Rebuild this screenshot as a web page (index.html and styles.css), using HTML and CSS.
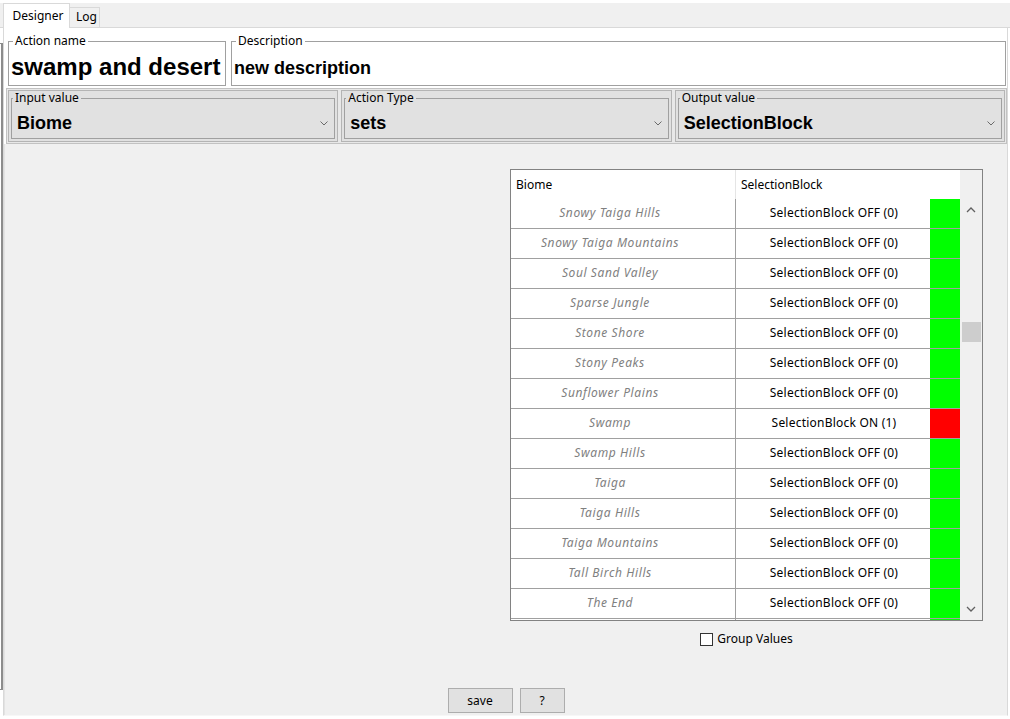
FILE: index.html
```html
<!DOCTYPE html>
<html lang="en">
<head>
<meta charset="utf-8">
<title>Designer</title>
<link rel="stylesheet" href="styles.css">
</head>
<body>
<div class="app">
  <div class="behind"></div>
  <div class="tabbar">
    <div class="tab tab-active">Designer</div>
    <div class="tab tab-log">Log</div>
  </div>
  <div class="page">
    <div class="fields">
      <fieldset class="gbox gbox-name">
        <legend>Action name</legend>
        <div class="gval gval-name">swamp and desert</div>
      </fieldset>
      <fieldset class="gbox gbox-desc">
        <legend>Description</legend>
        <div class="gval gval-desc">new description</div>
      </fieldset>
    </div>
    <div class="combos">
      <div class="combo">
        <fieldset class="cframe">
          <legend>Input value</legend>
          <div class="cval"><span>Biome</span><svg class="chev" width="8" height="5" viewBox="0 0 8 5"><polyline points="0.5,0.5 4,4 7.5,0.5" fill="none" stroke="#6a6a6a" stroke-width="1"/></svg></div>
        </fieldset>
      </div>
      <div class="combo">
        <fieldset class="cframe">
          <legend>Action Type</legend>
          <div class="cval"><span>sets</span><svg class="chev" width="8" height="5" viewBox="0 0 8 5"><polyline points="0.5,0.5 4,4 7.5,0.5" fill="none" stroke="#6a6a6a" stroke-width="1"/></svg></div>
        </fieldset>
      </div>
      <div class="combo">
        <fieldset class="cframe">
          <legend>Output value</legend>
          <div class="cval"><span>SelectionBlock</span><svg class="chev" width="8" height="5" viewBox="0 0 8 5"><polyline points="0.5,0.5 4,4 7.5,0.5" fill="none" stroke="#6a6a6a" stroke-width="1"/></svg></div>
        </fieldset>
      </div>
    </div>
    <div class="main">
      <div class="tablecol">
        <div class="grid">
          <div class="gbody">
            <div class="ghead">
              <div class="hc hc1">Biome</div>
              <div class="hc hc2">SelectionBlock</div>
            </div>
            <div class="grow"><div class="c1">Snowy Taiga Hills</div><div class="c2">SelectionBlock OFF (0)</div><div class="c3 off"></div></div>
            <div class="grow"><div class="c1">Snowy Taiga Mountains</div><div class="c2">SelectionBlock OFF (0)</div><div class="c3 off"></div></div>
            <div class="grow"><div class="c1">Soul Sand Valley</div><div class="c2">SelectionBlock OFF (0)</div><div class="c3 off"></div></div>
            <div class="grow"><div class="c1">Sparse Jungle</div><div class="c2">SelectionBlock OFF (0)</div><div class="c3 off"></div></div>
            <div class="grow"><div class="c1">Stone Shore</div><div class="c2">SelectionBlock OFF (0)</div><div class="c3 off"></div></div>
            <div class="grow"><div class="c1">Stony Peaks</div><div class="c2">SelectionBlock OFF (0)</div><div class="c3 off"></div></div>
            <div class="grow"><div class="c1">Sunflower Plains</div><div class="c2">SelectionBlock OFF (0)</div><div class="c3 off"></div></div>
            <div class="grow"><div class="c1">Swamp</div><div class="c2">SelectionBlock ON (1)</div><div class="c3 on"></div></div>
            <div class="grow"><div class="c1">Swamp Hills</div><div class="c2">SelectionBlock OFF (0)</div><div class="c3 off"></div></div>
            <div class="grow"><div class="c1">Taiga</div><div class="c2">SelectionBlock OFF (0)</div><div class="c3 off"></div></div>
            <div class="grow"><div class="c1">Taiga Hills</div><div class="c2">SelectionBlock OFF (0)</div><div class="c3 off"></div></div>
            <div class="grow"><div class="c1">Taiga Mountains</div><div class="c2">SelectionBlock OFF (0)</div><div class="c3 off"></div></div>
            <div class="grow"><div class="c1">Tall Birch Hills</div><div class="c2">SelectionBlock OFF (0)</div><div class="c3 off"></div></div>
            <div class="grow"><div class="c1">The End</div><div class="c2">SelectionBlock OFF (0)</div><div class="c3 off"></div></div>
            <div class="grow"><div class="c1"></div><div class="c2"></div><div class="c3 off"></div></div>
          </div>
          <div class="vscroll">
            <div class="sb-head"></div>
            <div class="sb-btn"><svg width="10" height="6" viewBox="0 0 10 6"><polyline points="1,5 5,1 9,5" fill="none" stroke="#606060" stroke-width="1.3"/></svg></div>
            <div class="sb-track"><div class="sb-thumb"></div></div>
            <div class="sb-btn"><svg width="10" height="6" viewBox="0 0 10 6"><polyline points="1,1 5,5 9,1" fill="none" stroke="#606060" stroke-width="1.3"/></svg></div>
          </div>
        </div>
        <label class="check"><span class="cbox"></span><span>Group Values</span></label>
      </div>
      <div class="buttons">
        <button class="btn btn-save">save</button>
        <button class="btn btn-help">?</button>
      </div>
    </div>
  </div>
</div>
</body>
</html>
```
FILE: styles.css
```css
* { box-sizing: border-box; }
html, body { margin: 0; padding: 0; }
body {
  width: 1010px;
  height: 719px;
  overflow: hidden;
  background: #ffffff;
  font-family: "Noto Sans", "Open Sans", sans-serif;
  font-size: 12px;
  color: #000;
}
.app {
  position: relative;
  width: 1010px;
  height: 719px;
}
.behind {
  position: absolute;
  left: -10px;
  top: 40px;
  width: 13px;
  height: 647px;
  border: 1px solid #8c8c8c;
  border-right-width: 2px;
}

/* tabs */
.tabbar {
  margin-top: 3px;
  height: 25px;
  background: #f0f0f0;
  border-bottom: 1px solid #d9d9d9;
  display: flex;
  align-items: flex-end;
  padding-left: 3px;
}
.tab {
  border: 1px solid #d9d9d9;
  border-bottom: none;
  line-height: 16px;
  text-align: center;
}
.tab-active {
  width: 67px;
  height: 25px;
  margin-bottom: -1px;
  background: #fff;
  padding-top: 4px;
  padding-left: 3px;
  position: relative;
}
.tab-log {
  width: 30px;
  height: 20px;
  padding-top: 1px;
  padding-left: 4px;
  background: #f0f0f0;
  border-left: none;
}

/* page */
.page {
  margin-left: 3px;
  width: 1005px;
  height: 688px;
  border: 1px solid #d9d9d9;
  border-top: none;
  border-bottom-color: #f7f7f7;
  background: #fff;
  display: flex;
  flex-direction: column;
}
.fields {
  display: flex;
  gap: 5px;
  padding: 6px 1px 0 4px;
}
.gbox {
  margin: 0;
  padding: 0 0 0 2px;
  border: 1px solid #a0a0a0;
  min-width: 0;
  height: 52px;
}
.gbox legend {
  margin-left: 2px;
  padding: 0 2px;
  line-height: 14px;
  font-size: 12px;
}
.gbox-name { width: 218px; flex: none; }
.gbox-desc { flex: 1; }
.gval {
  font-family: "Liberation Sans", Arial, sans-serif;
  font-weight: bold;
  height: 28px;
  line-height: 28px;
  white-space: nowrap;
}
.gval-name { font-size: 24px; margin-top: 5px; }
.gval-desc { font-size: 18px; margin-top: 6px; }

/* combos */
.combos {
  display: flex;
  gap: 3px;
  margin: 2px 0 0 2px;
  padding: 1px;
  height: 56px;
  border: 1px solid #c2c2c2;
  background: #e8e8e8;
}
.combo {
  flex: 1;
  display: flex;
  background: #e1e1e1;
  border: 1px solid #b4b4b4;
  padding: 0 2px 2px 2px;
}
.cframe {
  flex: 1;
  margin: 0;
  padding: 0;
  border: 1px solid #a0a0a0;
  min-width: 0;
}
.cframe legend {
  margin-left: 1px;
  padding: 0 2px;
  line-height: 14px;
  font-size: 12px;
}
.cval {
  display: flex;
  align-items: center;
  justify-content: space-between;
  height: 24px;
  margin-top: 6px;
  padding-left: 5px;
  padding-right: 6px;
  font-family: "Liberation Sans", Arial, sans-serif;
  font-weight: bold;
  font-size: 18px;
  line-height: 24px;
}
.chev { display: block; margin-top: 1px; }

/* main */
.main {
  flex: 1;
  background: #f0f0f0;
  display: flex;
  flex-direction: column;
  border-left: 1px solid #e3e3e3;
}
.tablecol {
  margin-top: 25px;
  margin-left: 505px;
  width: 473px;
  display: flex;
  flex-direction: column;
  align-items: center;
}
.grid {
  width: 473px;
  height: 452px;
  border: 1px solid #828282;
  background: #fff;
  display: flex;
  overflow: hidden;
}
.gbody {
  width: 449px;
  display: flex;
  flex-direction: column;
  flex: none;
}
.ghead {
  height: 29px;
  display: flex;
  flex: none;
  background: #fff;
}
.hc {
  line-height: 29px;
  padding-left: 5px;
  white-space: nowrap;
}
.hc1 { width: 225px; border-right: 1px solid #e5e5e5; }
.hc2 { width: 224px; }
.grow {
  height: 30px;
  flex: none;
  display: flex;
  border-bottom: 1px solid #a0a0a0;
}
.grow .c1 {
  width: 225px;
  border-right: 1px solid #a0a0a0;
  padding-right: 26px;
  text-align: center;
  font-style: italic;
  color: #808080;
  letter-spacing: 0.6px;
  line-height: 27px;
  white-space: nowrap;
  overflow: hidden;
}
.grow .c2 {
  width: 194px;
  padding-left: 2px;
  text-align: center;
  letter-spacing: 0.22px;
  line-height: 27px;
  white-space: nowrap;
  overflow: hidden;
}
.grow .c3 { width: 30px; }
.c3.off { background: #00ff00; }
.c3.on { background: #ff0000; }

.vscroll {
  width: 22px;
  flex: none;
  background: #f0f0f0;
  display: flex;
  flex-direction: column;
}
.sb-head { height: 29px; flex: none; }
.sb-btn {
  height: 22px;
  flex: none;
  display: flex;
  align-items: center;
  justify-content: center;
}
.sb-btn svg { display: block; }
.sb-track { flex: 1; }
.sb-thumb {
  margin-top: 101px;
  margin-left: 2px;
  width: 19px;
  height: 20px;
  background: #cdcdcd;
}

.check {
  margin-top: 10px;
  display: flex;
  align-items: center;
  gap: 4px;
  line-height: 16px;
}
.cbox {
  width: 13px;
  height: 13px;
  border: 1px solid #333;
  background: #fff;
}

.buttons {
  margin-top: auto;
  padding-bottom: 2px;
  display: flex;
  justify-content: center;
  gap: 7px;
}
.btn {
  height: 25px;
  margin: 0;
  padding: 0;
  background: #e1e1e1;
  border: 1px solid #adadad;
  font-family: "Noto Sans", "Open Sans", sans-serif;
  font-size: 12px;
  color: #000;
  line-height: 16px;
}
.btn-save { width: 65px; }
.btn-help { width: 45px; }
```
